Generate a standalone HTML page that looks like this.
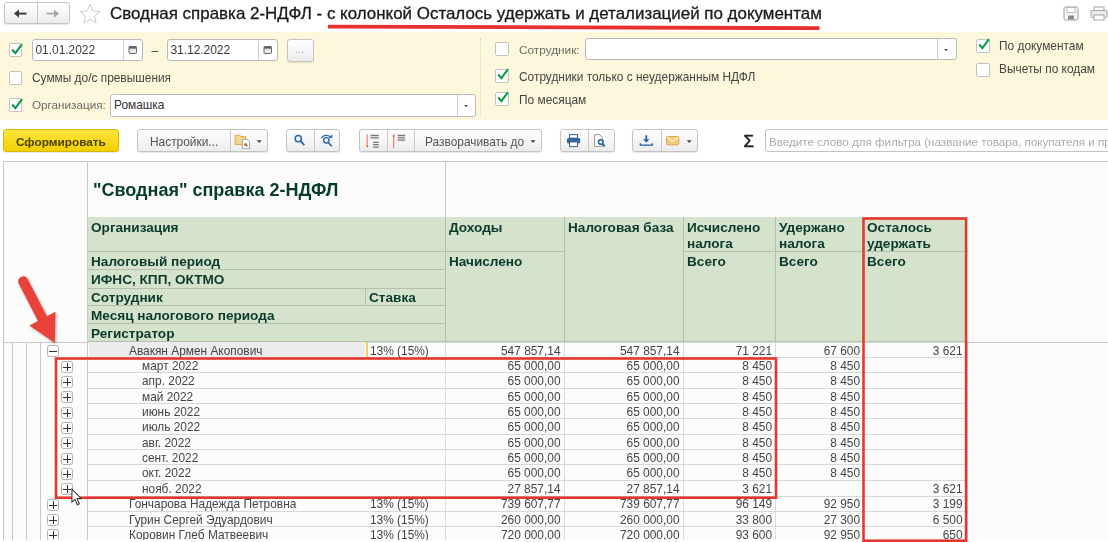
<!DOCTYPE html>
<html lang="ru"><head><meta charset="utf-8"><title>Сводная справка 2-НДФЛ</title>
<style>
*{box-sizing:border-box;margin:0;padding:0}
html,body{width:1108px;height:542px;overflow:hidden;background:#fff}
body{position:relative;font-family:"Liberation Sans",sans-serif;font-size:11.9px;color:#3c3c3c}
#wrap{position:absolute;left:0;top:0;width:1108px;height:542px;overflow:hidden;filter:blur(.6px)}
.abs,.hl,.vl,.t,.tb,.btn,.inp,.cb,.lbl,.hc,.ht{position:absolute}
#title{left:110px;top:3.2px;font-size:16.95px;line-height:22px;color:#1a1a1a;-webkit-text-stroke:.3px #1a1a1a;white-space:nowrap}
#panel{left:0;top:32px;width:1108px;height:88px;background:#fdf7db}
.btn{border:1px solid #c3c3c3;border-radius:3px;background:linear-gradient(#ffffff,#ececec);box-shadow:0 1px 1px rgba(0,0,0,.10)}
.inp{border:1px solid #b9b9b9;border-radius:3px;background:#fff;height:22px}
.cb{width:13.5px;height:13.5px;border:1px solid #c2c2c2;border-radius:2px;background:#fff}
.lbl{white-space:nowrap;line-height:14px;color:#444}
.sep{position:absolute;top:0;bottom:0;width:1px;background:#c8c8c8}
#rep{left:3px;top:161px;width:1105px;height:381px;background:#fcfcfa;border-top:1px solid #c4c4c4;border-left:1px solid #c4c4c4}
.hl{left:88px;width:879px;height:1px;background:#d3d9de}
.vl{width:1px;background:#c9c9c9}
.t{white-space:nowrap;line-height:15.33px;height:15.33px;font-size:11.9px;color:#42454c}
.n{text-align:right}
.tb{width:12px;height:12px;border:1px solid #b4b4b4;border-radius:2.5px;background:#fdfdfd}
.tb:before{content:"";position:absolute;left:1px;right:1px;top:4.5px;height:1px;background:#333}
.tb.plus:after{content:"";position:absolute;top:1px;bottom:1px;left:4.5px;width:1px;background:#333}
.hc{background:#d6e4ce;border-right:1px solid #b4c2ad;border-bottom:1px solid #b4c2ad}
.ht{font-weight:bold;font-size:13.6px;line-height:16px;color:#0b3a2b;white-space:nowrap}
.hb{position:absolute;background:#b3c1ac}
.red{position:absolute;border:2.5px solid #e6362f}
</style></head><body><div id="wrap">

<!-- top bar -->
<div class="btn" style="left:4px;top:2px;width:66px;height:22px"><div class="sep" style="left:32px"></div>
<svg class="abs" style="left:0;top:0" width="64" height="20" viewBox="0 0 64 20"><path d="M12 10.6h9.5" stroke="#3a3a3a" stroke-width="1.9" fill="none"/><path d="M9 10.6l5-4.2v8.400z" fill="#3a3a3a"/><path d="M41.5 10.6h9.5" stroke="#a8a8a8" stroke-width="1.7" fill="none"/><path d="M54 10.6l-5-4.2v8.400z" fill="#a8a8a8"/></svg></div>
<svg class="abs" style="left:79px;top:2.5px" width="22" height="21" viewBox="0 0 22 21"><path d="M11 1.6l2.9 6.3 6.9.7-5.2 4.6 1.5 6.7L11 16.400l-6.1 3.5 1.5-6.7L1.2 8.6l6.9-.7z" fill="#fff" stroke="#c9c9c9" stroke-width="1"/></svg>
<div id="title" class="abs">Сводная справка 2-НДФЛ - с колонкой Осталось удержать и детализацией по документам</div>
<svg class="abs" style="left:320px;top:20px" width="510" height="14" viewBox="0 0 510 14"><path d="M8 6.6 L250 7.4 L499.5 8.2" stroke="#e8302e" stroke-width="3.8" fill="none"/></svg>
<!-- top-right icons -->
<svg class="abs" style="left:1063px;top:6px" width="16" height="15" viewBox="0 0 16 15"><rect x="1" y="1" width="14" height="13" rx="1.5" fill="#f4f4f4" stroke="#9d9d9d"/><rect x="4" y="1.5" width="8" height="5" fill="#fff" stroke="#b0b0b0" stroke-width=".8"/><rect x="5" y="9.5" width="6" height="4" fill="#8c8c8c"/></svg>
<svg class="abs" style="left:1090px;top:6px" width="18" height="15" viewBox="0 0 18 15"><rect x="4" y="1" width="10" height="4" fill="#fff" stroke="#a6a6a6"/><rect x="1" y="4.5" width="16" height="7" rx="1.5" fill="#ededed" stroke="#a0a0a0"/><rect x="4" y="9" width="10" height="5" fill="#fff" stroke="#a6a6a6"/></svg>

<!-- yellow panel -->
<div id="panel" class="abs"></div>
<div class="abs" style="left:480px;top:38px;width:0;height:78px;border-left:1px dotted #d9d3b5"></div>

<div class="cb" style="left:8.5px;top:43px"></div>
<svg class="abs chk" style="left:9.5px;top:41.5px" width="14" height="14" viewBox="0 0 14 14"><path d="M2.2 7.5l3.2 3.6L12 2.2" stroke="#0a9a48" stroke-width="2.1" fill="none"/></svg>
<div class="inp" style="left:32px;top:39px;width:111px"><div class="sep" style="left:90px;background:#d0d0d0"></div></div>
<div class="lbl" style="left:35.5px;top:43px;color:#3a3a3a">01.01.2022</div>
<svg class="abs" style="left:127.5px;top:45px" width="10" height="10" viewBox="0 0 10 10"><rect x="1" y="1.5" width="7.5" height="7" rx="1" fill="#e8e8e8" stroke="#666" stroke-width="1"/><rect x="1" y="1.5" width="7.5" height="2.2" fill="#666"/></svg>
<div class="lbl" style="left:151.5px;top:43.5px;color:#333">–</div>
<div class="inp" style="left:167px;top:39px;width:111px"><div class="sep" style="left:90px;background:#d0d0d0"></div></div>
<div class="lbl" style="left:170.5px;top:43px;color:#3a3a3a">31.12.2022</div>
<svg class="abs" style="left:262.5px;top:45px" width="10" height="10" viewBox="0 0 10 10"><rect x="1" y="1.5" width="7.5" height="7" rx="1" fill="#e8e8e8" stroke="#666" stroke-width="1"/><rect x="1" y="1.5" width="7.5" height="2.2" fill="#666"/></svg>
<div class="btn" style="left:287px;top:38.5px;width:27px;height:23px"></div>
<div class="lbl" style="left:295px;top:42px;color:#aaa;font-size:11px">...</div>

<div class="cb" style="left:8.5px;top:71px"></div>
<div class="lbl" style="left:32px;top:71px">Суммы до/с превышения</div>

<div class="cb" style="left:8.5px;top:98px"></div>
<svg class="abs chk" style="left:9.5px;top:96.5px" width="14" height="14" viewBox="0 0 14 14"><path d="M2.2 7.5l3.2 3.6L12 2.2" stroke="#0a9a48" stroke-width="2.1" fill="none"/></svg>
<div class="lbl" style="left:32px;top:98px;color:#6c6c6c;font-size:11.7px">Организация:</div>
<div class="inp" style="left:110px;top:94px;width:366px;height:22.5px"><div class="sep" style="left:346px;background:#d0d0d0"></div></div>
<div class="lbl" style="left:114px;top:98px;color:#333">Ромашка</div>
<div class="abs" style="left:463.5px;top:104.5px;border:2.5px solid transparent;border-top:2.8px solid #444"></div>

<div class="cb" style="left:495px;top:42px"></div>
<div class="lbl" style="left:519px;top:43px;color:#6c6c6c;font-size:11.8px">Сотрудник:</div>
<div class="inp" style="left:585px;top:38px;width:372px"><div class="sep" style="left:351px;background:#d0d0d0"></div></div>
<div class="abs" style="left:943.5px;top:48.5px;border:2.5px solid transparent;border-top:2.8px solid #444"></div>

<div class="cb" style="left:495px;top:69px"></div>
<svg class="abs chk" style="left:496px;top:67px" width="14" height="14" viewBox="0 0 14 14"><path d="M2.2 7.5l3.2 3.6L12 2.2" stroke="#0a9a48" stroke-width="2.1" fill="none"/></svg>
<div class="lbl" style="left:519px;top:70px">Сотрудники только с неудержанным НДФЛ</div>

<div class="cb" style="left:495px;top:92px"></div>
<svg class="abs chk" style="left:496px;top:90px" width="14" height="14" viewBox="0 0 14 14"><path d="M2.2 7.5l3.2 3.6L12 2.2" stroke="#0a9a48" stroke-width="2.1" fill="none"/></svg>
<div class="lbl" style="left:519px;top:93px">По месяцам</div>

<div class="cb" style="left:976px;top:39px"></div>
<svg class="abs chk" style="left:977px;top:37px" width="14" height="14" viewBox="0 0 14 14"><path d="M2.2 7.5l3.2 3.6L12 2.2" stroke="#0a9a48" stroke-width="2.1" fill="none"/></svg>
<div class="lbl" style="left:999px;top:39px">По документам</div>
<div class="cb" style="left:976px;top:63px"></div>
<div class="lbl" style="left:999px;top:62px">Вычеты по кодам</div>

<!-- toolbar -->
<div class="btn" style="left:3px;top:129px;width:116px;height:23px;background:linear-gradient(#ffe53d,#f2cf00);border-color:#d9b900"></div>
<div class="lbl" style="left:16px;top:135px;font-weight:bold;color:#4a4200;font-size:11.8px">Сформировать</div>

<div class="btn" style="left:137px;top:129px;width:131px;height:23px"><div class="sep" style="left:92px"></div></div>
<div class="lbl" style="left:150px;top:135px;color:#555">Настройки...</div>

<div class="btn" style="left:286px;top:129px;width:54px;height:23px"><div class="sep" style="left:27px"></div></div>

<div class="btn" style="left:359px;top:129px;width:183px;height:23px"><div class="sep" style="left:27px"></div><div class="sep" style="left:54px"></div></div>
<div class="lbl" style="left:425px;top:135px;color:#555">Разворачивать до</div>

<div class="btn" style="left:560px;top:129px;width:55px;height:23px"><div class="sep" style="left:27px"></div></div>

<div class="btn" style="left:632px;top:129px;width:66px;height:23px"><div class="sep" style="left:28px"></div></div>

<div class="lbl" style="left:743.5px;top:132px;font-size:17px;line-height:20px;color:#222;-webkit-text-stroke:.5px #222">Σ</div>
<div class="inp" style="left:765px;top:129px;width:350px;height:23px;border-color:#c3c3c3"></div>
<div class="lbl" style="left:769px;top:135px;color:#ababab;font-size:11.6px">Введите слово для фильтра (название товара, покупателя и пр</div>

<svg class="abs" style="left:0;top:122px" width="1108" height="38" viewBox="0 122 1108 38">
<!-- folder+doc -->
<path d="M235.2 135.2h4.6l1.2 1.400h4.8v7.8h-10.6z" fill="#f4d98c" stroke="#cfa540" stroke-width=".9"/>
<path d="M242.3 139.3h4.8l2.400 2.400v7h-7.2z" fill="#fff" stroke="#9b9b9b" stroke-width=".9"/>
<circle cx="245.6" cy="144.6" r="1.5" fill="#d9644a"/><circle cx="246.8" cy="145.8" r="1" fill="#4da05a"/>
<path d="M256.8 140.2h4.8l-2.400 2.7z" fill="#444"/>
<!-- search -->
<circle cx="298.3" cy="138.7" r="3.1" fill="none" stroke="#2a69ad" stroke-width="1.5"/><path d="M300.6 141.2l3.7 4" stroke="#2a69ad" stroke-width="1.8"/>
<!-- search again -->
<circle cx="326.3" cy="140.3" r="2.7" fill="none" stroke="#2a69ad" stroke-width="1.400"/><path d="M328.3 142.5l3.400 3.7" stroke="#2a69ad" stroke-width="1.7"/>
<path d="M321.3 138.2c1.6-3 6.400-3.9 9.2-1.3" fill="none" stroke="#2a69ad" stroke-width="1.3"/><path d="M332.3 134.3v3.8h-3.8z" fill="#2a69ad"/>
<!-- collapse/expand -->
<path d="M367.2 134.3v11.5" stroke="#e6704e" stroke-width="1"/><circle cx="367.2" cy="146.3" r="1.1" fill="#e6704e"/>
<path d="M370.5 135.5h8.3M370.5 137.9h8.3M373 142.3h5.8M373 144.7h5.8M373 147.1h5.8" stroke="#777" stroke-width="1.3"/>
<path d="M393.7 135v13" stroke="#e6704e" stroke-width="1"/><path d="M392.2 136.6l1.5-2.6 1.5 2.6z" fill="#e6704e"/>
<path d="M397.6 135.5h7.6M397.6 137.8h7.6M397.6 140.1h7.6" stroke="#777" stroke-width="1.3"/>
<path d="M530.6 140.2h4.8l-2.400 2.7z" fill="#444"/>
<!-- print -->
<rect x="569.5" y="134.6" width="8" height="3.5" fill="#fff" stroke="#3d6a98" stroke-width="1"/>
<rect x="567" y="138" width="13.2" height="5.6" rx="1.6" fill="#336699"/>
<rect x="569.5" y="142" width="8" height="4.6" fill="#fff" stroke="#3d6a98" stroke-width="1"/>
<!-- preview -->
<path d="M594.5 134.7h5.2l2.8 2.8v8.9h-8z" fill="#fff" stroke="#8f8f8f" stroke-width=".9"/>
<circle cx="600.8" cy="142" r="2.3" fill="#fff" stroke="#1f5fa3" stroke-width="1.5"/><path d="M602.5 143.9l2.3 2.5" stroke="#1f5fa3" stroke-width="1.7"/>
<!-- download -->
<path d="M646.3 135.3v5.5" stroke="#1f5fa3" stroke-width="1.8"/><path d="M643 139.2h6.6l-3.3 3.3z" fill="#1f5fa3"/>
<path d="M640.3 143.3v1.8h12v-1.8" fill="none" stroke="#1f5fa3" stroke-width="1.3"/>
<!-- mail -->
<rect x="666.5" y="136.5" width="12.3" height="8.3" rx="1.3" fill="#f6cd7c" stroke="#dba848" stroke-width="1"/>
<path d="M667.3 137.5l5.400 3.8 5.400-3.8" stroke="#fdf0cf" stroke-width="1.2" fill="none"/>
<path d="M686.8 140.2h4.8l-2.400 2.7z" fill="#444"/>
</svg>
<!-- report area -->
<div id="rep" class="abs"></div>
<div class="vl" style="left:12px;top:342px;height:200px"></div>
<div class="vl" style="left:26px;top:342px;height:200px"></div>
<div class="vl" style="left:40px;top:342px;height:200px"></div>
<div class="vl" style="left:87px;top:162px;height:380px"></div>
<div class="vl" style="left:445px;top:162px;height:56px"></div>
<div class="hl" style="left:4px;top:341.7px;width:1104px;background:#c9c9c9"></div>
<!-- data col lines -->
<div class="vl" style="left:445px;top:342px;height:200px;background:#d9dcdf"></div>
<div class="vl" style="left:564px;top:342px;height:200px;background:#d9dcdf"></div>
<div class="vl" style="left:683px;top:342px;height:200px;background:#d9dcdf"></div>
<div class="vl" style="left:775px;top:342px;height:200px;background:#d9dcdf"></div>
<div class="vl" style="left:967px;top:342px;height:200px;background:#d9dcdf"></div>

<div class="ht" style="left:93px;top:179px;font-size:18px;line-height:22px;color:#063c2d">"Сводная" справка 2-НДФЛ</div>

<!-- header cells -->
<div class="abs" style="left:88px;top:217px;width:879px;height:125.5px;background:#d5e3cd"></div>
<div class="hb" style="left:88px;top:251px;width:358px;height:1px"></div>
<div class="hb" style="left:88px;top:269px;width:358px;height:1px"></div>
<div class="hb" style="left:88px;top:288px;width:358px;height:1px"></div>
<div class="hb" style="left:88px;top:305px;width:358px;height:1px"></div>
<div class="hb" style="left:88px;top:323px;width:358px;height:1px"></div>
<div class="hb" style="left:365px;top:288px;width:1px;height:18px"></div>
<div class="hb" style="left:445px;top:217px;width:1px;height:125px"></div>
<div class="hb" style="left:446px;top:251px;width:118px;height:1px"></div>
<div class="hb" style="left:564px;top:217px;width:1px;height:125px"></div>
<div class="hb" style="left:683px;top:217px;width:1px;height:125px"></div>
<div class="hb" style="left:684px;top:251px;width:284px;height:1px"></div>
<div class="hb" style="left:775px;top:217px;width:1px;height:125px"></div>
<div class="hb" style="left:88px;top:341px;width:880px;height:1px"></div>
<div class="ht" style="left:91px;top:220px">Организация</div>
<div class="ht" style="left:91px;top:254px">Налоговый период</div>
<div class="ht" style="left:91px;top:272px">ИФНС, КПП, ОКТМО</div>
<div class="ht" style="left:91px;top:290px">Сотрудник</div>
<div class="ht" style="left:369px;top:290px">Ставка</div>
<div class="ht" style="left:91px;top:308px">Месяц налогового периода</div>
<div class="ht" style="left:91px;top:326px">Регистратор</div>
<div class="ht" style="left:449px;top:220px">Доходы</div>
<div class="ht" style="left:449px;top:254px">Начислено</div>
<div class="ht" style="left:568px;top:220px">Налоговая база</div>
<div class="ht" style="left:687px;top:220px">Исчислено<br>налога</div>
<div class="ht" style="left:687px;top:254px">Всего</div>
<div class="ht" style="left:779px;top:220px">Удержано<br>налога</div>
<div class="ht" style="left:779px;top:254px">Всего</div>
<div class="ht" style="left:867px;top:220px">Осталось<br>удержать</div>
<div class="ht" style="left:867px;top:254px">Всего</div>

<!-- selected row cell bg -->
<div class="abs" style="left:89px;top:342px;width:276px;height:15.5px;background:#ececec"></div>
<div class="abs" style="left:366px;top:342px;width:2px;height:15.5px;background:#f0d264"></div>

<div class="hl" style="top:357px"></div>
<div class="t" style="left:129px;top:343.6px">Авакян Армен Акопович</div>
<div class="t" style="left:370px;top:343.6px">13% (15%)</div>
<div class="t n" style="left:445.5px;width:115.0px;top:343.6px">547 857,14</div>
<div class="t n" style="left:564.0px;width:115.5px;top:343.6px">547 857,14</div>
<div class="t n" style="left:683.0px;width:89.0px;top:343.6px">71 221</div>
<div class="t n" style="left:775.5px;width:84.5px;top:343.6px">67 600</div>
<div class="t n" style="left:863.5px;width:99.0px;top:343.6px">3 621</div>
<div class="tb minus" style="left:47px;top:345px"></div>
<div class="hl" style="top:372px"></div>
<div class="t" style="left:142px;top:358.9px">март 2022</div>
<div class="t n" style="left:445.5px;width:115.0px;top:358.9px">65 000,00</div>
<div class="t n" style="left:564.0px;width:115.5px;top:358.9px">65 000,00</div>
<div class="t n" style="left:683.0px;width:89.0px;top:358.9px">8 450</div>
<div class="t n" style="left:775.5px;width:84.5px;top:358.9px">8 450</div>
<div class="tb plus" style="left:61px;top:361px"></div>
<div class="hl" style="top:388px"></div>
<div class="t" style="left:142px;top:374.3px">апр. 2022</div>
<div class="t n" style="left:445.5px;width:115.0px;top:374.3px">65 000,00</div>
<div class="t n" style="left:564.0px;width:115.5px;top:374.3px">65 000,00</div>
<div class="t n" style="left:683.0px;width:89.0px;top:374.3px">8 450</div>
<div class="t n" style="left:775.5px;width:84.5px;top:374.3px">8 450</div>
<div class="tb plus" style="left:61px;top:376px"></div>
<div class="hl" style="top:403px"></div>
<div class="t" style="left:142px;top:389.6px">май 2022</div>
<div class="t n" style="left:445.5px;width:115.0px;top:389.6px">65 000,00</div>
<div class="t n" style="left:564.0px;width:115.5px;top:389.6px">65 000,00</div>
<div class="t n" style="left:683.0px;width:89.0px;top:389.6px">8 450</div>
<div class="t n" style="left:775.5px;width:84.5px;top:389.6px">8 450</div>
<div class="tb plus" style="left:61px;top:391px"></div>
<div class="hl" style="top:418px"></div>
<div class="t" style="left:142px;top:404.9px">июнь 2022</div>
<div class="t n" style="left:445.5px;width:115.0px;top:404.9px">65 000,00</div>
<div class="t n" style="left:564.0px;width:115.5px;top:404.9px">65 000,00</div>
<div class="t n" style="left:683.0px;width:89.0px;top:404.9px">8 450</div>
<div class="t n" style="left:775.5px;width:84.5px;top:404.9px">8 450</div>
<div class="tb plus" style="left:61px;top:407px"></div>
<div class="hl" style="top:434px"></div>
<div class="t" style="left:142px;top:420.2px">июль 2022</div>
<div class="t n" style="left:445.5px;width:115.0px;top:420.2px">65 000,00</div>
<div class="t n" style="left:564.0px;width:115.5px;top:420.2px">65 000,00</div>
<div class="t n" style="left:683.0px;width:89.0px;top:420.2px">8 450</div>
<div class="t n" style="left:775.5px;width:84.5px;top:420.2px">8 450</div>
<div class="tb plus" style="left:61px;top:422px"></div>
<div class="hl" style="top:449px"></div>
<div class="t" style="left:142px;top:435.6px">авг. 2022</div>
<div class="t n" style="left:445.5px;width:115.0px;top:435.6px">65 000,00</div>
<div class="t n" style="left:564.0px;width:115.5px;top:435.6px">65 000,00</div>
<div class="t n" style="left:683.0px;width:89.0px;top:435.6px">8 450</div>
<div class="t n" style="left:775.5px;width:84.5px;top:435.6px">8 450</div>
<div class="tb plus" style="left:61px;top:437px"></div>
<div class="hl" style="top:464px"></div>
<div class="t" style="left:142px;top:450.9px">сент. 2022</div>
<div class="t n" style="left:445.5px;width:115.0px;top:450.9px">65 000,00</div>
<div class="t n" style="left:564.0px;width:115.5px;top:450.9px">65 000,00</div>
<div class="t n" style="left:683.0px;width:89.0px;top:450.9px">8 450</div>
<div class="t n" style="left:775.5px;width:84.5px;top:450.9px">8 450</div>
<div class="tb plus" style="left:61px;top:453px"></div>
<div class="hl" style="top:480px"></div>
<div class="t" style="left:142px;top:466.2px">окт. 2022</div>
<div class="t n" style="left:445.5px;width:115.0px;top:466.2px">65 000,00</div>
<div class="t n" style="left:564.0px;width:115.5px;top:466.2px">65 000,00</div>
<div class="t n" style="left:683.0px;width:89.0px;top:466.2px">8 450</div>
<div class="t n" style="left:775.5px;width:84.5px;top:466.2px">8 450</div>
<div class="tb plus" style="left:61px;top:468px"></div>
<div class="hl" style="top:496px"></div>
<div class="t" style="left:142px;top:481.6px">нояб. 2022</div>
<div class="t n" style="left:445.5px;width:115.0px;top:481.6px">27 857,14</div>
<div class="t n" style="left:564.0px;width:115.5px;top:481.6px">27 857,14</div>
<div class="t n" style="left:683.0px;width:89.0px;top:481.6px">3 621</div>
<div class="t n" style="left:863.5px;width:99.0px;top:481.6px">3 621</div>
<div class="tb plus" style="left:61px;top:483px"></div>
<div class="hl" style="top:511px"></div>
<div class="t" style="left:129px;top:497.3px">Гончарова Надежда Петровна</div>
<div class="t" style="left:370px;top:497.3px">13% (15%)</div>
<div class="t n" style="left:445.5px;width:115.0px;top:497.3px">739 607,77</div>
<div class="t n" style="left:564.0px;width:115.5px;top:497.3px">739 607,77</div>
<div class="t n" style="left:683.0px;width:89.0px;top:497.3px">96 149</div>
<div class="t n" style="left:775.5px;width:84.5px;top:497.3px">92 950</div>
<div class="t n" style="left:863.5px;width:99.0px;top:497.3px">3 199</div>
<div class="tb plus" style="left:47px;top:499px"></div>
<div class="hl" style="top:526px"></div>
<div class="t" style="left:129px;top:512.6px">Гурин Сергей Эдуардович</div>
<div class="t" style="left:370px;top:512.6px">13% (15%)</div>
<div class="t n" style="left:445.5px;width:115.0px;top:512.6px">260 000,00</div>
<div class="t n" style="left:564.0px;width:115.5px;top:512.6px">260 000,00</div>
<div class="t n" style="left:683.0px;width:89.0px;top:512.6px">33 800</div>
<div class="t n" style="left:775.5px;width:84.5px;top:512.6px">27 300</div>
<div class="t n" style="left:863.5px;width:99.0px;top:512.6px">6 500</div>
<div class="tb plus" style="left:47px;top:514px"></div>
<div class="hl" style="top:542px"></div>
<div class="t" style="left:129px;top:528.0px">Коровин Глеб Матвеевич</div>
<div class="t" style="left:370px;top:528.0px">13% (15%)</div>
<div class="t n" style="left:445.5px;width:115.0px;top:528.0px">720 000,00</div>
<div class="t n" style="left:564.0px;width:115.5px;top:528.0px">720 000,00</div>
<div class="t n" style="left:683.0px;width:89.0px;top:528.0px">93 600</div>
<div class="t n" style="left:775.5px;width:84.5px;top:528.0px">92 950</div>
<div class="t n" style="left:863.5px;width:99.0px;top:528.0px">650</div>
<div class="tb plus" style="left:47px;top:529px"></div>

<!-- red annotations -->
<div class="abs" style="left:0;top:539.5px;width:1108px;height:3px;background:#fff"></div>
<svg class="abs" style="left:0;top:0" width="1108" height="542" viewBox="0 0 1108 542"><rect x="56" y="358.5" width="720" height="139.2" fill="none" stroke="#e6362f" stroke-width="2.6"/><rect x="863.5" y="218.5" width="102.6" height="322.2" fill="none" stroke="#e6362f" stroke-width="2.6"/></svg>
<svg class="abs" style="left:0;top:260px;filter:drop-shadow(1px 1px 1.5px rgba(0,0,0,.35))" width="80" height="100" viewBox="0 260 80 100"><path d="M27.400 278.7 L46.9 316.3 L55.400 311.7 L54.8 343 L29.5 325.5 L38 320.9 L18.6 283.3 A5 5 0 0 1 27.400 278.7Z" fill="#e8423b"/></svg>
<!-- cursor -->
<svg class="abs" style="left:70.5px;top:487.5px" width="13" height="19" viewBox="0 0 14 20"><path d="M1 1v14l3.3-3 2.5 5.8 2.2-1-2.5-5.6h4.5z" fill="#fff" stroke="#333" stroke-width="1.1"/></svg>
</div></body></html>
